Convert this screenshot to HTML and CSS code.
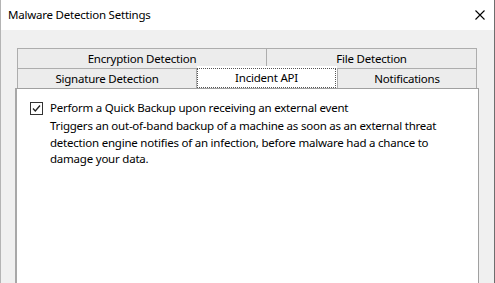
FILE: index.html
```html
<!DOCTYPE html>
<html>
<head>
<meta charset="utf-8">
<link rel="stylesheet" href="styles.css">
</head>
<body>
<div class="window">
  <div class="titlebar">
    <span class="title">Malware Detection Settings</span>
    <svg class="close" width="10" height="10" viewBox="0 0 10 10"><path d="M0.5 0.5 L9.5 9.5 M9.5 0.5 L0.5 9.5" stroke="#000" stroke-width="1.1" fill="none"/></svg>
  </div>
  <div class="body">
    <div class="tabs">
      <div class="tabrow">
        <div class="tab w-enc">Encryption Detection</div>
        <div class="tab w-file">File Detection</div>
      </div>
      <div class="tabrow">
        <div class="tab w-sig">Signature Detection</div>
        <div class="tab selected w-inc"><span class="focus">Incident API</span></div>
        <div class="tab w-not">Notifications</div>
      </div>
    </div>
    <div class="panel">
      <div class="option">
        <span class="checkbox">
          <svg width="11" height="11" viewBox="0 0 11 11"><path d="M2 5.5 L4.3 8 L9 2.5" stroke="#222" stroke-width="1.3" fill="none"/></svg>
        </span>
        <span class="label">Perform a Quick Backup upon receiving an external event</span>
      </div>
      <p class="desc">Triggers an out-of-band backup of a machine as soon as an external threat detection engine notifies of an infection, before malware had a chance to damage your data.</p>
    </div>
  </div>
</div>
</body>
</html>
```
FILE: styles.css
```css
* { box-sizing: border-box; }
html, body { margin: 0; padding: 0; }
body {
  width: 495px;
  height: 283px;
  overflow: hidden;
  font-family: "Noto Sans", "DejaVu Sans", sans-serif;
  font-size: 11.5px;
  letter-spacing: -0.22px;
  color: #000;
}
.window {
  width: 495px;
  height: 283px;
  background: #f0f0f0;
  border-left: 1px solid #b4b4b4;
  border-right: 1px solid #6e6e6e;
  display: flex;
  flex-direction: column;
}
.titlebar {
  height: 30px;
  background: #fff;
  display: flex;
  align-items: center;
  justify-content: space-between;
  padding: 0 9px 1px 7px;
}
.close { display: block; }
.body {
  flex: 1;
  padding: 18px 0 0 14px;
  display: flex;
  flex-direction: column;
}
.tabs {
  margin-left: 2px;
  display: flex;
  flex-direction: column;
}
.tabrow { display: flex; }
.tab {
  height: 20px;
  background: #ececec;
  border: 1px solid #adadad;
  border-bottom: none;
  display: flex;
  align-items: center;
  justify-content: center;
  line-height: 16px;
}
.tab + .tab { border-left: none; }
.w-enc { width: 250px; }
.w-file { width: 210px; }
.w-sig { width: 180px; }
.w-inc { width: 140px; }
.w-not { width: 140px; }
.tab.selected {
  background: #fff;
  height: 22px;
  margin-top: -2px;
  margin-bottom: -1px;
  position: relative;
  z-index: 1;
  border-color: #fff;
  padding: 0;
}
.focus {
  display: flex;
  align-items: center;
  justify-content: center;
  width: 100%;
  height: 20px;
  border: 1px dotted #555;
}
.tab.selected + .tab { border-left: 1px solid #adadad; }
.panel {
  width: 464px;
  flex: 1;
  background: #fff;
  border: 1px solid #a0a0a0;
  border-left: 2px solid #a8a8a8;
  border-bottom: none;
  padding: 11px 0 0 13px;
}
.option {
  display: flex;
  align-items: center;
  height: 16px;
  line-height: 16px;
}
.checkbox {
  width: 13px;
  height: 13px;
  border: 1px solid #333;
  background: #fff;
  display: flex;
  align-items: center;
  justify-content: center;
  margin-right: 7px;
}
.checkbox svg { display: block; }
.desc {
  margin: 2px 0 0 20px;
  width: 420px;
  line-height: 16.5px;
}
```
